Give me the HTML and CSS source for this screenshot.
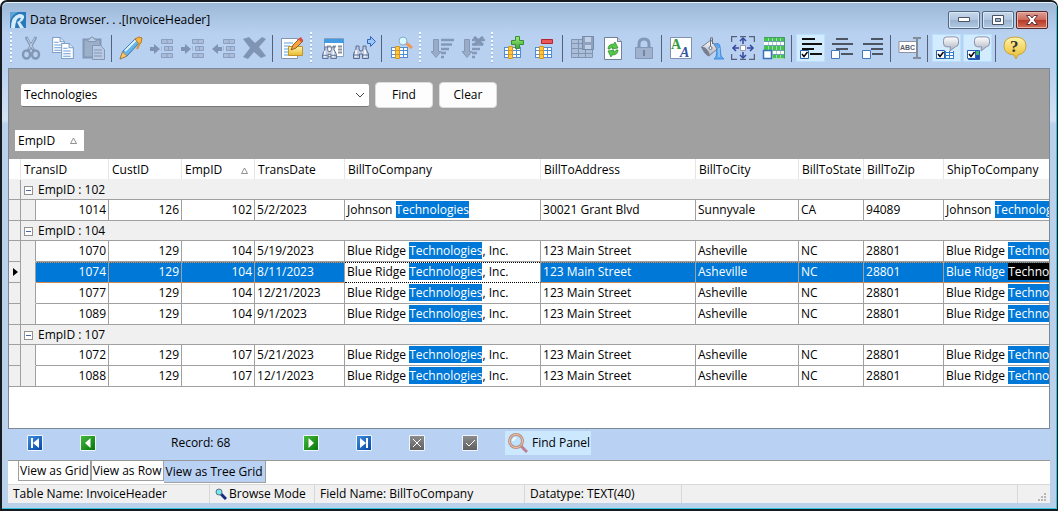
FILE: index.html
```
<!DOCTYPE html>
<html lang="en">
  <head>
    <meta charset="UTF-8" />
    <meta name="viewport" content="width=device-width, initial-scale=1.0" />
    <title>Data Browser</title>
    <link rel="stylesheet" href="styles.css">
  </head>
  <body>
    <!-- Shared icon parts -->
    <svg class="defs" aria-hidden="true">
      <defs>
        <linearGradient id="metal" x2="0" y2="1">
          <stop offset="0" stop-color="#fff" />
          <stop offset="1" stop-color="#a9aebc" />
        </linearGradient>
        <linearGradient id="yellow" x2="0" y2="1">
          <stop offset="0" stop-color="#fff4a8" />
          <stop offset="1" stop-color="#e9b92e" />
        </linearGradient>
        <linearGradient id="green" x2="0" y2="1">
          <stop offset="0" stop-color="#a4ec80" />
          <stop offset="1" stop-color="#38a830" />
        </linearGradient>
        <symbol id="page" viewBox="0 0 12 15">
          <path d="M.5.5h7l4 4v10H.5z" fill="#fff" stroke="#7f9fc6" />
          <path d="M7.5.5v4h4" fill="#dbe8f8" stroke="#7f9fc6" />
          <path d="M2 5h4M2 7.5h7M2 10h7M2 12.5h7" stroke="#6b9fd8" />
        </symbol>
        <symbol id="rows" viewBox="0 0 12 19">
          <path d="M.5.5h11v4H.5zM.5 14.5h11v4H.5z" fill="#a9bdd9" stroke="#8ba0c0" />
          <path d="M3.500 7.500h8v4h-8z" fill="#a9bdd9" stroke="#8ba0c0" />
          <path d="M6 0v5M6 14v5M7.500 7v5M0 7v5" stroke="#8ba0c0" />
        </symbol>
        <symbol id="binoculars" viewBox="0 0 16 14">
          <path d="M3 1h3v3l1 2h2l1-2V1h3v3l2.500 5v4.500h-6V9h-3v4.500h-6V9L3 4z" fill="#c3cddf" stroke="#566a92" />
          <path d="M3 5v7M12 5v7" stroke="#fff" stroke-width="1.500" />
          <path d="M1 10h5M10 10h5" stroke="#566a92" />
        </symbol>
        <symbol id="cells" viewBox="0 0 17 13">
          <path d="M0 1h17v11H0z" fill="#fff" />
          <path d="M0 1.500h17M0 4.500h17M0 8.500h17M0 11.500h17M.5 1v11M12.500 1v11M16.500 1v11" stroke="#4f8ed4" />
          <path d="M4.500.5h4v12h-4z" fill="#ffc93e" stroke="#dc9420" />
          <path d="M4.500 4.500h4M4.500 8.500h4" stroke="#dc9420" />
        </symbol>
        <symbol id="sort" viewBox="0 0 23 22">
          <path d="M2.500 2.500h5v12h2.500l-5 6-5-6h2.500z" fill="#9aabc5" stroke="#8499ba" />
          <path d="M10 3h13M10 7.500h11M10 12h8M10 16h5M10 20h3" stroke="#8499ba" stroke-width="2.500" />
        </symbol>
        <symbol id="check" viewBox="0 0 9 9">
          <path d="M.5.5h8v8h-8z" fill="#fff" stroke="#245fae" />
          <path d="M2 4l2 2.500L7.500 2" fill="none" stroke="#000" stroke-width="1.500" />
        </symbol>
        <symbol id="bubble" viewBox="0 0 17 16">
          <path d="M4 .5h9q3.500 0 3.500 3.500v3q0 3.500-3.500 4l-5.500 4.500.5-4.500H4Q.5 11 .5 7V4Q.5.5 4 .5z" fill="url(#metal)" stroke="#858ca5" />
        </symbol>
      </defs>
    </svg>

    <div class="window">
      <header class="title-bar">
        <svg class="app-icon" viewBox="0 0 16 16" aria-hidden="true">
          <path d="M0 0h16v16H0z" fill="#2878ba" />
          <path d="M0 0h8Q2 3 0 9z" fill="#5fa3d6" />
          <path d="M1 16Q1 4 9 2q6 0 5 4-1 3-4 4l4 6h-4L7 10q3-1 4-4-5-2-6 10z" fill="#d7ecfa" />
        </svg>
        <h1>Data Browser. . .[InvoiceHeader]</h1>
        <div class="window-buttons">
          <button type="button" aria-label="Minimize">
            <svg width="12" height="6" viewBox="0 0 12 6"><path d="M.5.5h11v4H.5z" fill="#fff" stroke="#4b5363" /></svg>
          </button>
          <button type="button" aria-label="Maximize">
            <svg width="12" height="10" viewBox="0 0 12 10"><path d="M.5.5h11v9H.5z" fill="#fff" stroke="#4b5363" /><path d="M3.500 3.500h5v3h-5z" fill="#9db7d4" stroke="#4b5363" /></svg>
          </button>
          <button type="button" class="close" aria-label="Close">
            <svg width="12" height="10" viewBox="0 0 12 10"><path d="M.5.5h3.500l2 2.500 2-2.500h3.500L8 5l3.500 4.500H8L6 7 4 9.500H.5L4 5z" fill="#fff" stroke="#603238" /></svg>
          </button>
        </div>
      </header>

      <div class="toolbar" role="toolbar" aria-label="Data tools">
        <span class="grip"></span>
        <button type="button" aria-label="Cut" disabled>
          <svg viewBox="0 0 24 24"><path d="M6 1l8 14M16 1L8 15" stroke="#8298b6" stroke-width="3" /><path d="M7 2l6 11M15 2L9 13" stroke="#c2d1e6" /><ellipse cx="6.500" cy="18.500" rx="3.500" ry="4" fill="none" stroke="#8298b6" stroke-width="2.500" /><ellipse cx="15.500" cy="18.500" rx="3.500" ry="4" fill="none" stroke="#8298b6" stroke-width="2.500" /></svg>
        </button>
        <button type="button" aria-label="Copy">
          <svg viewBox="0 0 24 24"><use href="#page" x="1" y="1" width="13" height="16" /><use href="#page" x="10" y="7" width="13" height="16" /></svg>
        </button>
        <button type="button" aria-label="Paste" disabled>
          <svg viewBox="0 0 24 24"><path d="M1.500 3.500h17v18h-17z" fill="#9cafca" stroke="#8298b6" stroke-width="2" /><path d="M6 5.500V3h2q0-2 2-2t2 2h2v2.500z" fill="#bdcde3" stroke="#8298b6" /><path d="M10.500 9.500h8l4 4v10h-12z" fill="#b9cae2" stroke="#8298b6" /><path d="M12 14h8M12 17h8M12 20h8" stroke="#8298b6" /></svg>
        </button>
        <span class="separator"></span>
        <button type="button" aria-label="Edit">
          <svg viewBox="0 0 24 24"><path d="M1 23l3-8L17 2l4 4L8 20z" fill="#68b4e8" stroke="#3976ae" /><path d="M6 15L18 3" stroke="#d9f4ff" stroke-width="2" /><path d="M1 23l2.500-7L8 20z" fill="#ffc562" stroke="#a77628" stroke-width=".7" /><path d="M16 3l4-2 3 1-1 5-2 1z" fill="#f9b645" stroke="#b67a26" /><path d="M21 7l-3 6" stroke="#d6942e" stroke-width="2" /></svg>
        </button>
        <button type="button" aria-label="Insert row" disabled>
          <svg viewBox="0 0 24 24"><use href="#rows" x="11" y="3" width="12" height="19" /><path d="M0 11h4V8l6 5-6 5v-3H0z" fill="#7f94b2" /></svg>
        </button>
        <button type="button" aria-label="Add row" disabled>
          <svg viewBox="0 0 24 24"><use href="#rows" x="11" y="3" width="12" height="19" /><path d="M0 11h4V8l6 5-6 5v-3H0z" fill="#7f94b2" /></svg>
        </button>
        <button type="button" aria-label="Remove row" disabled>
          <svg viewBox="0 0 24 24"><use href="#rows" x="11" y="3" width="12" height="19" /><path d="M10 11H6V8l-6 5 6 5v-3h4z" fill="#7f94b2" /></svg>
        </button>
        <button type="button" aria-label="Delete" disabled>
          <svg viewBox="0 0 24 24"><path d="M0 3l6-2 6 6 7-6 4 2-7 8 7 9-5 2-7-6-6 7-5-2 7-9z" fill="#8095b3" /></svg>
        </button>
        <span class="separator"></span>
        <button type="button" aria-label="Edit note">
          <svg viewBox="0 0 24 24"><path d="M1.500 2.500h16v20h-16z" fill="#fff" stroke="#8594ae" /><path d="M4 7h9M4 10h6M4 13h4M4 16h4M4 19h8" stroke="#57a0da" /><path d="M8.500 10.500h14v9h-14z" fill="url(#yellow)" stroke="#c29427" /><path d="M11 14l2-5 7-7 3 3-7 7z" fill="#f7a43d" stroke="#975b2c" /><path d="M18 3l3-2 2 3-2 2z" fill="#df4b46" /></svg>
        </button>
        <span class="grip"></span>
        <button type="button" aria-label="Find record">
          <svg viewBox="0 0 24 24"><path d="M3.500 2.500h19v18h-19z" fill="#fff" stroke="#8b9fbe" /><path d="M3 3h20v4H3z" fill="#459be2" /><path d="M6 10.500h4M12 10.500h3M17 10.500h4M17 13.500h4M17 16.500h4" stroke="#8a929e" stroke-width="2" /><use href="#binoculars" x="1" y="10" width="15" height="13" /></svg>
        </button>
        <button type="button" aria-label="Find next">
          <svg viewBox="0 0 24 24"><use href="#binoculars" x="1" y="9" width="16" height="14" /><path d="M15.500 3.500h3v-3l5 5-5 5v-3h-3z" fill="#9cc8f8" stroke="#3165bd" /></svg>
        </button>
        <span class="separator"></span>
        <button type="button" aria-label="Search column">
          <svg viewBox="0 0 24 24"><use href="#cells" x="2" y="10" width="17" height="13" /><path d="M17 7l6 5" stroke="#ed9958" stroke-width="3" /><circle cx="14" cy="5" r="4" fill="#d9f7ff" stroke="#85aeca" /></svg>
        </button>
        <span class="grip"></span>
        <button type="button" aria-label="Sort" disabled>
          <svg viewBox="0 0 24 24"><use href="#sort" x="1" y="1" width="23" height="22" /></svg>
        </button>
        <button type="button" aria-label="Clear sort" disabled>
          <svg viewBox="0 0 24 24"><use href="#sort" x="1" y="1" width="23" height="22" /><path d="M13 1l9 8M22 1l-9 8" stroke="#8095b3" stroke-width="3" /></svg>
        </button>
        <span class="grip"></span>
        <button type="button" aria-label="Add column">
          <svg viewBox="0 0 24 24"><use href="#cells" x="2" y="10" width="17" height="13" /><path d="M13.500.5h4v4h4v4h-4v4h-4v-4h-4v-4h4z" fill="url(#green)" stroke="#368f32" /></svg>
        </button>
        <button type="button" aria-label="Remove column">
          <svg viewBox="0 0 24 24"><use href="#cells" x="2" y="10" width="17" height="13" /><path d="M8.500 3.500h11v4h-11z" fill="#ed5657" stroke="#b62632" /></svg>
        </button>
        <span class="separator"></span>
        <button type="button" aria-label="Save table" disabled>
          <svg viewBox="0 0 24 24"><path d="M1.500 3.500h21v18h-21z" fill="#abbed9" stroke="#8095b3" /><path d="M1 7.500h22M1 12.500h22M1 17.500h22M8.500 3v19M15.500 3v19" stroke="#8095b3" /><path d="M12.500.5h11v13h-11z" fill="#8fa3bf" stroke="#7589a8" /><path d="M15 1h6v5h-6zM15 9h6v4h-6z" fill="#c0d1e8" /></svg>
        </button>
        <button type="button" aria-label="Refresh">
          <svg viewBox="0 0 24 24"><path d="M3.500 1.500h13l4 4v18h-17z" fill="#fff" stroke="#718197" /><path d="M16.500 1.500v4h4" fill="#ccd3df" stroke="#718197" /><path d="M7 13q0-5 6-5l1-2 3 6-6 1 1-2q-3 0-3 2zM17 14q0 5-6 5l-1 2-3-6 6-1-1 2q3 0 3-2z" fill="#54c946" stroke="#248a2a" stroke-width=".7" /></svg>
        </button>
        <button type="button" aria-label="Lock" disabled>
          <svg viewBox="0 0 24 24"><path d="M7 11V8q0-5 5-5t5 5v3" fill="none" stroke="#8298b6" stroke-width="3" /><path d="M3.500 11.500h17v11h-17z" fill="#9fb1cc" stroke="#8298b6" /><path d="M12 14v6" stroke="#7085a3" stroke-width="2" /></svg>
        </button>
        <span class="separator"></span>
        <button type="button" aria-label="Font">
          <svg viewBox="0 0 24 24"><path d="M1.500 1.500h21v21h-21z" fill="#fff" stroke="#8091b3" /><text class="letter-green" x="2" y="13">A</text><text class="letter-blue" x="11" y="21">A</text></svg>
        </button>
        <button type="button" aria-label="Fill color">
          <svg viewBox="0 0 24 24"><path d="M14 8q6-2 6 3l1 9 3 3H14q4-3 2-10z" fill="#58a9ed" stroke="#4e86dc" /><path d="M19 12v9" stroke="#b6dcff" /><path d="M1.500 11L11 4l6 9-8 7q-3 0-7.500-9z" fill="url(#metal)" stroke="#777f8f" /><path d="M1.500 11q3-1 6 3t1.500 6q-4-1-7.500-9z" fill="#777f8f" /><path d="M10.500 12V3q1-4 2 0v5" fill="none" stroke="#666d7b" /><circle cx="10.500" cy="12" r="1.500" fill="#fff" stroke="#666d7b" /></svg>
        </button>
        <button type="button" aria-label="Resize columns">
          <svg viewBox="0 0 24 24"><path d="M6 .5H.5V6M18 .5h5.500V6M.5 18v5.500H6M23.500 18v5.500H18M9 .5h6M9 23.500h6" fill="none" stroke="#56607a" stroke-width="1.500" /><path d="M12 2v20M2 12h20" stroke="#35459e" stroke-width="1.500" /><path d="M9 5l3-3 3 3M9 19l3 3 3-3M5 9l-3 3 3 3M19 9l3 3-3 3" fill="none" stroke="#35459e" stroke-width="1.500" /><path d="M8 8h8v8H8z" fill="#b9d0f2" /><path d="M9.500 9.500h5v5h-5z" fill="#fff" stroke="#999ca6" /></svg>
        </button>
        <button type="button" aria-label="Cell colors">
          <svg viewBox="0 0 24 24"><path d="M2 1h21v22H2z" fill="#fff" /><path d="M2 3h21M2 12h21M2 20.500h21" stroke="#43c34e" stroke-width="4" /><path d="M6.500 1v22M10.500 1v22M14.500 1v22M18.500 1v22" stroke="#a3d7bd" /><path d="M2 5.500h21M2 9.500h21M2 14.500h21M2 18.500h21" stroke="#6d9fb1" /><path d="M2 1.500h20.500v21" fill="none" stroke="#429c60" /><path d="M1.500 14.500h8v8h-8z" fill="#fff" stroke="#3771b7" stroke-width="1.500" /></svg>
        </button>
        <span class="separator"></span>
        <button type="button" class="active" aria-label="Align left" aria-pressed="true">
          <svg viewBox="0 0 24 24"><path d="M3 3h13M3 8h20M3 13h12M11 18h12" stroke="#111" stroke-width="2" /><use href="#check" x="1" y="14" width="9" height="9" /></svg>
        </button>
        <button type="button" aria-label="Align center">
          <svg viewBox="0 0 24 24"><path d="M6 3h12M2 8h21M6 13h12M11 18h12" stroke="#4c5564" stroke-width="2" /><path d="M1.500 14.500h8v8h-8z" fill="#fff" stroke="#3d79bf" /></svg>
        </button>
        <button type="button" aria-label="Align right">
          <svg viewBox="0 0 24 24"><path d="M10 3h12M2 8h20M10 13h12M11 18h11" stroke="#4c5564" stroke-width="2" /><path d="M1.500 14.500h8v8h-8z" fill="#fff" stroke="#3d79bf" /></svg>
        </button>
        <span class="separator"></span>
        <button type="button" aria-label="Rename">
          <svg viewBox="0 0 24 24"><path d="M1 5.500h18v11H1z" fill="#fff" stroke="#8d929e" /><text class="letters" x="2" y="14">ABC</text><path d="M15 2h3l1 1 1-1h3M19 3v18M15 22h3l1-1 1 1h3" fill="none" stroke="#858c99" stroke-width="2" /></svg>
        </button>
        <span class="separator"></span>
        <button type="button" class="active" aria-label="Grid hints" aria-pressed="true">
          <svg viewBox="0 0 24 24"><path d="M1 15h18v8H1z" fill="#fff" /><path d="M1 16.500h18M1 19.500h18M1 22.500h18M10.500 15v8M14.500 15v8M18.500 15v8" stroke="#327dc4" /><use href="#bubble" x="8" y="0" width="16" height="16" /><use href="#check" x="1" y="14" width="9" height="9" /></svg>
        </button>
        <button type="button" class="active" aria-label="Field hints" aria-pressed="true">
          <svg viewBox="0 0 24 24"><path d="M2.500 14.500h11v9h-11z" fill="#3db66b" stroke="#215baf" /><path d="M10 19h3v4h-3z" fill="#2149b0" /><use href="#bubble" x="8" y="0" width="16" height="16" /><use href="#check" x="1" y="14" width="9" height="9" /></svg>
        </button>
        <span class="separator"></span>
        <button type="button" aria-label="Help">
          <svg viewBox="0 0 24 24"><path d="M12 1q11 0 11 9 0 7-8 9l-2 4-2-4Q1 18 1 10q0-9 11-9z" fill="url(#yellow)" stroke="#c6a436" /><text class="question" x="7" y="16">?</text></svg>
        </button>
      </div>

      <main class="client">
        <form class="find-panel">
          <div class="find-row">
            <span class="combo">
              <select aria-label="Search text">
                <option>Technologies</option>
              </select>
              <svg width="10" height="6" viewBox="0 0 10 6" aria-hidden="true"><path d="M1 1l4 4 4-4" fill="none" stroke="#444" /></svg>
            </span>
            <button type="button" class="push">Find</button>
            <button type="button" class="push">Clear</button>
          </div>
          <button type="button" class="group-chip">EmpID
            <svg width="7" height="7" viewBox="0 0 7 7"><path d="M3.500 1L6.500 6.500h-6z" fill="none" stroke="#777" stroke-width=".8" /></svg>
          </button>
        </form>

        <div class="grid">
          <table>
            <colgroup>
              <col class="col-marker" />
              <col class="col-indent" />
              <col class="col-id" />
              <col class="col-id" />
              <col class="col-id" />
              <col class="col-date" />
              <col class="col-company" />
              <col class="col-address" />
              <col class="col-city" />
              <col class="col-state" />
              <col class="col-zip" />
              <col />
            </colgroup>
            <thead>
              <tr>
                <th></th>
                <th colspan="2">TransID</th>
                <th>CustID</th>
                <th><span class="sorted">EmpID <svg width="7" height="7" viewBox="0 0 7 7"><path d="M3.500 1L6.500 6.500h-6z" fill="none" stroke="#777" stroke-width=".8" /></svg></span></th>
                <th>TransDate</th>
                <th>BillToCompany</th>
                <th>BillToAddress</th>
                <th>BillToCity</th>
                <th>BillToState</th>
                <th>BillToZip</th>
                <th>ShipToCompany</th>
              </tr>
            </thead>
            <tbody>
              <tr class="group">
                <td></td>
                <td colspan="11"><button type="button" class="toggle" aria-label="Collapse"></button>EmpID : 102</td>
              </tr>
              <tr>
                <td></td><td></td>
                <td>1014</td><td>126</td><td>102</td><td>5/2/2023</td>
                <td>Johnson <mark>Technologies</mark></td>
                <td>30021 Grant Blvd</td><td>Sunnyvale</td><td>CA</td><td>94089</td>
                <td>Johnson <mark>Technologies</mark></td>
              </tr>
            </tbody>
            <tbody>
              <tr class="group">
                <td></td>
                <td colspan="11"><button type="button" class="toggle" aria-label="Collapse"></button>EmpID : 104</td>
              </tr>
              <tr>
                <td></td><td></td>
                <td>1070</td><td>129</td><td>104</td><td>5/19/2023</td>
                <td>Blue Ridge <mark>Technologies</mark>, Inc.</td>
                <td>123 Main Street</td><td>Asheville</td><td>NC</td><td>28801</td>
                <td>Blue Ridge <mark>Technologies</mark></td>
              </tr>
              <tr class="selected">
                <td><svg class="marker" width="5" height="8" viewBox="0 0 5 8"><path d="M0 0l5 4-5 4z" /></svg></td><td></td>
                <td>1074</td><td>129</td><td>104</td><td>8/11/2023</td>
                <td class="focused">Blue Ridge <mark>Technologies</mark>, Inc.</td>
                <td>123 Main Street</td><td>Asheville</td><td>NC</td><td>28801</td>
                <td>Blue Ridge <mark>Technologies</mark></td>
              </tr>
              <tr>
                <td></td><td></td>
                <td>1077</td><td>129</td><td>104</td><td>12/21/2023</td>
                <td>Blue Ridge <mark>Technologies</mark>, Inc.</td>
                <td>123 Main Street</td><td>Asheville</td><td>NC</td><td>28801</td>
                <td>Blue Ridge <mark>Technologies</mark></td>
              </tr>
              <tr>
                <td></td><td></td>
                <td>1089</td><td>129</td><td>104</td><td>9/1/2023</td>
                <td>Blue Ridge <mark>Technologies</mark>, Inc.</td>
                <td>123 Main Street</td><td>Asheville</td><td>NC</td><td>28801</td>
                <td>Blue Ridge <mark>Technologies</mark></td>
              </tr>
            </tbody>
            <tbody>
              <tr class="group">
                <td></td>
                <td colspan="11"><button type="button" class="toggle" aria-label="Collapse"></button>EmpID : 107</td>
              </tr>
              <tr>
                <td></td><td></td>
                <td>1072</td><td>129</td><td>107</td><td>5/21/2023</td>
                <td>Blue Ridge <mark>Technologies</mark>, Inc.</td>
                <td>123 Main Street</td><td>Asheville</td><td>NC</td><td>28801</td>
                <td>Blue Ridge <mark>Technologies</mark></td>
              </tr>
              <tr>
                <td></td><td></td>
                <td>1088</td><td>129</td><td>107</td><td>12/1/2023</td>
                <td>Blue Ridge <mark>Technologies</mark>, Inc.</td>
                <td>123 Main Street</td><td>Asheville</td><td>NC</td><td>28801</td>
                <td>Blue Ridge <mark>Technologies</mark></td>
              </tr>
            </tbody>
          </table>
        </div>
      </main>

      <!-- Record navigator -->
      <nav class="navigator" aria-label="Records">
        <button type="button" class="nav blue" aria-label="First">
          <svg viewBox="0 0 14 14"><path d="M3 2h2v10H3zM11 2v10L5 7z" /></svg>
        </button>
        <button type="button" class="nav green" aria-label="Previous">
          <svg viewBox="0 0 14 14"><path d="M9.500 2v10L4 7z" /></svg>
        </button>
        <span class="record">Record: 68</span>
        <button type="button" class="nav green" aria-label="Next">
          <svg viewBox="0 0 14 14"><path d="M4.500 2v10L10 7z" /></svg>
        </button>
        <button type="button" class="nav blue" aria-label="Last">
          <svg viewBox="0 0 14 14"><path d="M3 2v10l6-5zM9 2h2v10H9z" /></svg>
        </button>
        <button type="button" class="nav gray" aria-label="Cancel">
          <svg viewBox="0 0 14 14"><path d="M3 3l8 8M11 3l-8 8" stroke="#fff" /></svg>
        </button>
        <button type="button" class="nav gray" aria-label="Post">
          <svg viewBox="0 0 14 14"><path d="M3 7l3 3 6-6" fill="none" stroke="#fff" /></svg>
        </button>
        <button type="button" class="find-toggle" aria-pressed="true">
          <svg width="20" height="20" viewBox="0 0 20 20"><path d="M13 13l6 6" stroke="#bd8190" stroke-width="3" /><circle cx="8" cy="8" r="6.500" fill="#bce3ff" stroke="#b98f8c" stroke-width="3" /><circle cx="8" cy="8" r="6.500" fill="none" stroke="#f0c995" /><path d="M5 8q0-3 3-3" fill="none" stroke="#fff" stroke-width="1.500" /></svg>
          Find Panel
        </button>
      </nav>

      <div class="tabs" role="tablist">
        <button type="button" role="tab">View as Grid</button>
        <button type="button" role="tab">View as Row</button>
        <button type="button" role="tab" class="current" aria-selected="true">View as Tree Grid</button>
      </div>

      <footer class="status">
        <span class="status-table">Table Name: InvoiceHeader</span>
        <span class="status-mode">
          <svg width="12" height="12" viewBox="0 0 12 12"><path d="M6 6l5 5" stroke="#102d82" stroke-width="3" /><circle cx="4" cy="4" r="3" fill="#75e7ef" stroke="#58717f" /></svg>
          Browse Mode
        </span>
        <span class="status-field">Field Name: BillToCompany</span>
        <span class="status-type">Datatype: TEXT(40)</span>
        <span class="status-rest"></span>
        <svg class="size-grip" width="9" height="9" viewBox="0 0 9 9" aria-hidden="true"><path d="M6 0h2v2H6zM3 3h2v2H3zM6 3h2v2H6zM0 6h2v2H0zM3 6h2v2H3zM6 6h2v2H6z" fill="#b8b8b8" /></svg>
      </footer>
    </div>
  </body>
</html>
```
FILE: styles.css
```
* {
  box-sizing: border-box;
}
body {
  margin: 0;
  background-color: #fff;
  color: #000;
  font-family: "Open Sans", "Noto Sans", sans-serif;
  font-size: 12px;
  line-height: 16px;
}
button,
select {
  margin: 0;
  padding: 0;
  border: 0;
  background: none;
  color: inherit;
  font: inherit;
  white-space: nowrap;
}
svg {
  display: block;
  flex: none;
}
.defs {
  position: absolute;
  width: 0;
  height: 0;
}

/* Window frame */
.window {
  display: flex;
  flex-direction: column;
  min-height: 100vh;
  padding: 0 7px 6px 6px;
  border: 1px solid #151b20;
  border-width: 2px 1px 2px 2px;
  border-radius: 7px 7px 0 0;
  background: linear-gradient(#9bb7d6 0, #b9d1f0 32px, #b9d1f0 66px, #d3e3f4 118px, #b9d1ea 122px);
  box-shadow: inset 0 1px #e9f3fc, inset -1px -1px #2fc4df;
}
.title-bar {
  display: flex;
  align-items: center;
  gap: 4px;
  height: 32px;
  padding: 4px 2px 0;
}
.title-bar h1 {
  flex: 1;
  margin: 0;
  font-size: 12px;
  font-weight: normal;
}
.app-icon {
  width: 16px;
  height: 16px;
}
.window-buttons {
  display: flex;
  gap: 2px;
}
.window-buttons button {
  display: flex;
  align-items: center;
  justify-content: center;
  width: 32px;
  height: 18px;
  border: 1px solid #526780;
  border-radius: 2px;
  background: linear-gradient(#c7d9ec 0, #b0c6df 48%, #98b2cf 50%, #b2cae4 100%);
  box-shadow: inset 0 0 0 1px #d9e7f5;
}
.window-buttons .close {
  border-color: #57262b;
  background: linear-gradient(#dfa096 0, #ca6c5d 48%, #b73625 50%, #d07058 100%);
  box-shadow: inset 0 0 0 1px #e9b4a9;
}

/* Toolbar */
.toolbar {
  display: flex;
  align-items: center;
  height: 34px;
  padding-bottom: 6px;
}
.toolbar button {
  display: flex;
  align-items: center;
  justify-content: center;
  width: 29px;
  height: 28px;
  margin: 0 1px;
}
.toolbar .active {
  background-color: #d2ebff;
  box-shadow: inset 0 0 0 1px #b9e1ff;
}
.toolbar svg {
  width: 24px;
  height: 24px;
}
.separator {
  width: 6px;
  height: 27px;
  background: linear-gradient(#53627c, #53627c) 2px 0 / 1px 100% no-repeat;
}
.grip {
  width: 10px;
  height: 32px;
  background: repeating-linear-gradient(#f4f8ff 0 2px, #9fb3d2 2px 3px, transparent 3px 4px) 3px 0 / 2px 100% no-repeat;
}
.grip:first-child {
  width: 8px;
  background-position-x: 2px;
}
.letter-green,
.letter-blue {
  font: bold 14px "Liberation Serif", serif;
  fill: #35993e;
}
.letter-blue {
  font-style: italic;
  fill: #3453a0;
}
.letters {
  font: bold 7px "Liberation Sans", sans-serif;
  fill: #555d6c;
}
.question {
  font: bold 17px "Liberation Serif", serif;
  fill: #38342b;
}

/* Find panel */
.client {
  display: flex;
  flex: 1;
  flex-direction: column;
  border: 1px solid #7c8798;
  background-color: #fff;
}
.find-panel {
  padding: 13px 6px 8px 12px;
  background-color: #a0a0a0;
}
.find-row {
  display: flex;
  align-items: center;
  gap: 6px;
  margin-bottom: 22px;
}
.combo {
  display: flex;
  align-items: center;
  width: 348px;
  height: 23px;
  padding-right: 4px;
  border-bottom: 1px solid #777;
  border-radius: 2px;
  background-color: #fff;
}
.combo select {
  flex: 1;
  height: 22px;
  padding: 0 3px;
  appearance: none;
}
.push {
  width: 58px;
  height: 26px;
  border: 1px solid #ddd;
  border-radius: 4px;
  background-color: #fdfdfd;
}
.group-chip {
  display: flex;
  align-items: center;
  justify-content: space-between;
  width: 69px;
  height: 21px;
  margin-left: -6px;
  padding: 0 7px 0 3px;
  background-color: #fff;
}

/* Tree grid */
.grid {
  overflow: hidden;
}
table {
  width: 100%;
  table-layout: fixed;
  border-collapse: separate;
  border-spacing: 0;
}
.col-marker {
  width: 12px;
}
.col-indent {
  width: 15px;
}
.col-id {
  width: 73px;
}
.col-date {
  width: 90px;
}
.col-company {
  width: 196px;
}
.col-address {
  width: 155px;
}
.col-city {
  width: 103px;
}
.col-state {
  width: 65px;
}
.col-zip {
  width: 80px;
}
th,
td {
  height: 21px;
  padding: 0 2px;
  border-right: 1px solid #a0a0a0;
  border-bottom: 1px solid #a0a0a0;
  overflow: hidden;
  text-align: left;
  white-space: nowrap;
}
th {
  padding: 2px 0 0 3px;
  border-right-color: #e5e5e5;
  border-bottom-color: #f0f0f0;
  font-weight: normal;
}
th:last-child,
td:last-child {
  border-right: 0;
}
.sorted {
  display: flex;
  align-items: center;
  justify-content: space-between;
  padding-right: 6px;
}
td:nth-child(3),
td:nth-child(4),
td:nth-child(5) {
  text-align: right;
}
td:first-child,
td:nth-child(2),
.group td {
  background-color: #f0f0f0;
}
td:nth-child(2) {
  border-bottom-color: #f0f0f0;
}
tr:last-child td:nth-child(2),
.group td {
  border-bottom-color: #a0a0a0;
}
.group td {
  height: 20px;
}
.toggle {
  width: 9px;
  height: 9px;
  margin: 0 5px 0 1px;
  border: 1px solid #919191;
  background: linear-gradient(#4668a8, #4668a8) center / 5px 1px no-repeat #fff;
}
mark {
  background-color: #0078d7;
  color: #fff;
}
.marker {
  margin-left: 2px;
}
.selected td:nth-child(n + 3) {
  border-bottom-color: #d58b50;
  background: repeating-linear-gradient(90deg, #f08c34 0 1px, #0078d7 1px 2px) top / 100% 1px no-repeat #0078d7;
  color: #fff;
}
.selected td.focused {
  border-bottom: 1px dotted #000;
  background: repeating-linear-gradient(90deg, #000 0 1px, #fff 1px 2px) top / 100% 1px no-repeat #fff;
  color: #000;
}
.selected td:last-child mark {
  background-color: #000;
}

/* Record navigator */
.navigator {
  display: flex;
  align-items: center;
  height: 31px;
  padding: 0 19px 3px;
  background-color: #b9d1f3;
}
.nav {
  width: 16px;
  height: 16px;
  margin-right: 37px;
  border: 1px solid #eef5ff;
  border-radius: 1px;
  fill: #fff;
}
.nav.blue {
  background: linear-gradient(135deg, #3d8ee0, #0648a4);
}
.nav.green {
  background: linear-gradient(135deg, #43b93c, #08760b);
}
.nav.gray {
  background: linear-gradient(#8b8b8b, #606060);
}
.record {
  width: 132px;
  margin-left: 38px;
}
.find-toggle {
  display: flex;
  align-items: center;
  gap: 4px;
  height: 24px;
  margin-left: -10px;
  padding: 0 1px 0 3px;
  background-color: #cce8ff;
}

/* View tabs */
.tabs {
  display: flex;
  align-items: flex-start;
  height: 24px;
  padding-left: 10px;
  border-top: 1px solid #979797;
  background-color: #fff;
}
.tabs button {
  height: 20px;
  padding: 0 1px;
  border: 1px solid #a0a0a0;
  border-top: 0;
}
.tabs .current {
  height: 22px;
  padding: 0 2px;
  border-left: 0;
  background-color: #b9d1f3;
}

/* Status bar */
.status {
  display: flex;
  align-items: center;
  height: 19px;
  border-top: 1px solid #d8d8d8;
  background-color: #f0f0f0;
}
.status span {
  display: flex;
  align-items: center;
  gap: 2px;
  height: 18px;
  padding: 0 5px;
  border-right: 1px solid #d7d7d7;
}
.status-table {
  width: 202px;
}
.status-mode {
  width: 105px;
}
.status-field {
  width: 210px;
}
.status-type {
  width: 157px;
}
.status-rest {
  flex: 1;
}
.size-grip {
  margin: 6px 3px 0 20px;
}
```
